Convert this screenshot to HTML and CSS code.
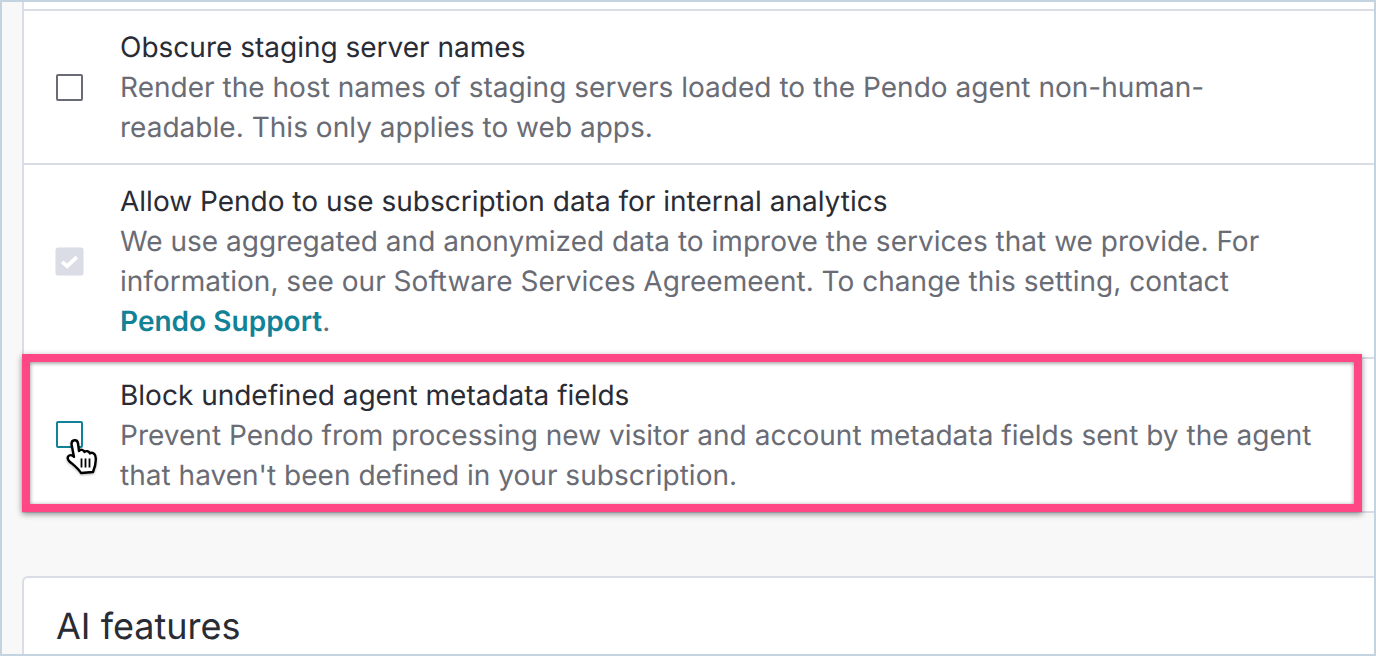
FILE: index.html
```html
<!DOCTYPE html>
<html lang="en">
<head>
<meta charset="utf-8">
<title>Settings</title>
<link rel="stylesheet" href="styles.css">
</head>
<body>
<div class="frame">
  <section class="card settings">
    <div class="row">
      <span class="box"></span>
      <div class="copy">
        <div class="title">Obscure staging server names</div>
        <p class="desc">Render the host names of staging servers loaded to the Pendo agent non-human-<br>readable. This only applies to web apps.</p>
      </div>
    </div>
    <div class="row">
      <span class="box box-disabled">
        <svg class="tick" viewBox="0 0 16 16" aria-hidden="true"><path d="M1.800 8.300 6 12 14.200 4.300" fill="none" stroke="#fff" stroke-width="3.200"/></svg>
      </span>
      <div class="copy">
        <div class="title">Allow Pendo to use subscription data for internal analytics</div>
        <p class="desc">We use aggregated and anonymized data to improve the services that we provide. For<br>information, see our Software Services Agreemeent. To change this setting, contact<br><a class="link" href="#">Pendo Support</a>.</p>
      </div>
    </div>
    <div class="row row-last">
      <span class="box box-hover"></span>
      <div class="copy">
        <div class="title">Block undefined agent metadata fields</div>
        <p class="desc">Prevent Pendo from processing new visitor and account metadata fields sent by the agent<br>that haven't been defined in your subscription.</p>
      </div>
      <div class="highlight"></div>
      <svg class="cursor" viewBox="0 0 36 40" aria-hidden="true">
        <path class="hand" d="M7.500 8C7.500 3 13.500 3 14 7.500L15 15C16.500 13 19.500 13.500 20.500 16C22 14.500 25 15 26 17.500C27.500 16 31 17 31.500 20.500C32.500 26 31 31 29 36L17 37C14 32 9.500 29 5 25C2 21.500 5 17.500 9 20L10 21Z"/>
        <path class="lines" d="M17.500 22.500V31.500M21.500 22.500V31.500M25.500 22.500V31.500"/>
      </svg>
    </div>
  </section>
  <section class="card ai">
    <h2 class="heading">AI features</h2>
  </section>
</div>
</body>
</html>
```
FILE: styles.css
```css
* { box-sizing: border-box; }
html, body { margin: 0; padding: 0; }
body {
  font-family: Inter, "Liberation Sans", sans-serif;
  background: #f8f8f8;
  text-rendering: geometricPrecision;
}

.frame {
  width: 1376px;
  height: 656px;
  border: 2px solid #c3d4e0;
  background: #f8f8f8;
  padding-left: 20px;
  overflow: hidden;
}

.card {
  background: #fff;
  border-left: 2px solid #dadce6;
}

.settings {
  padding-top: 7px;
}

.row {
  position: relative;
  display: flex;
  align-items: center;
  gap: 37px;
  padding: 16px 0 16px 32px;
  border-top: 2px solid #dadce6;
}

.row-last {
  border-bottom: 2px solid #dadce6;
}

.box {
  flex: none;
  display: flex;
  align-items: center;
  justify-content: center;
  width: 27px;
  height: 27px;
  border: 2px solid #6a6c75;
  border-radius: 2px;
  background: #fff;
}

.box-disabled {
  border-color: #dadce6;
  background: #dadce6;
  box-shadow: 0 0 0 0.5px #dadce6;
}

.box-hover {
  border-color: #128297;
  margin-top: -2px;
}

.tick {
  flex: none;
  width: 19px;
  height: 19px;
}

.copy {
  font-size: 28px;
  line-height: 40px;
}

.title {
  color: #2a2c35;
}

.desc {
  margin: 0;
  color: #6a6c75;
  letter-spacing: 0.02px;
}

.link {
  color: #128297;
  font-weight: 600;
  text-decoration: none;
}

.highlight {
  position: absolute;
  left: -2px;
  top: -5px;
  width: 1340px;
  height: 158px;
  border: 8px solid #ff4785;
  box-shadow: 0 2px 6px rgba(0, 0, 0, 0.45), inset 0 1px 4px rgba(0, 0, 0, 0.45);
  pointer-events: none;
}

.cursor {
  position: absolute;
  left: 40px;
  top: 77px;
  width: 36px;
  height: 40px;
  filter: drop-shadow(0 1px 1px rgba(0, 0, 0, 0.3));
}

.hand {
  fill: #fff;
  stroke: #000;
  stroke-width: 2.400;
  stroke-linejoin: round;
}

.lines {
  fill: none;
  stroke: #000;
  stroke-width: 1.800;
}

.ai {
  margin-top: 63px;
  height: 90px;
  border-top: 2px solid #dadce6;
  border-top-left-radius: 6px;
  padding: 24px 0 0 32px;
}

.heading {
  margin: 0;
  font-size: 36px;
  line-height: 48px;
  font-weight: 400;
  color: #2a2c35;
}
```
